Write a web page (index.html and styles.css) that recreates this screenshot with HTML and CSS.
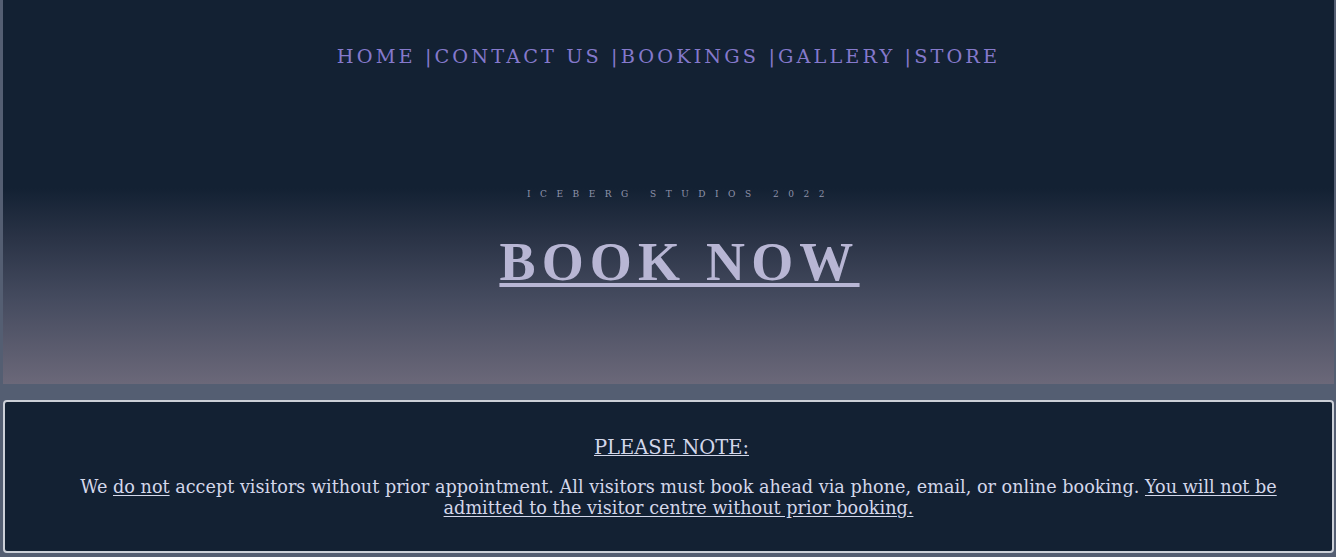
FILE: index.html
```html
<!DOCTYPE html>
<html lang="en">
<head>
<meta charset="utf-8">
<title>Iceberg Studios - Bookings</title>
<link rel="stylesheet" href="styles.css">
</head>
<body>
<header class="hero">
  <nav class="nav">
    <a href="#">HOME</a> |<a href="#">CONTACT US</a> |<a href="#">BOOKINGS</a> |<a href="#">GALLERY</a> |<a href="#">STORE</a>
  </nav>
  <p class="tagline">ICEBERG STUDIOS 2022</p>
  <h1 class="title"><a href="#">BOOK NOW</a></h1>
</header>
<section class="notice">
  <h2 class="notice-title">PLEASE NOTE:</h2>
  <p class="notice-text">We <u>do not</u> accept visitors without prior appointment. All visitors must book ahead via phone, email, or online booking. <u>You will not be admitted to the visitor centre without prior booking.</u></p>
</section>
</body>
</html>
```
FILE: styles.css
```css
html, body {
  margin: 0;
  padding: 0;
}
body {
  background: #545e72;
  padding: 0 2px 0 3px;
  font-family: "DejaVu Serif", Georgia, serif;
  height: 557px;
  box-sizing: border-box;
  overflow: hidden;
}
.hero {
  height: 384px;
  background: linear-gradient(to bottom, #132133 0%, #132133 49%, #2a3346 62%, #454b5f 78%, #6b6879 100%);
  text-align: center;
  padding-top: 45px;
  box-sizing: border-box;
}
.nav {
  font-size: 19.3px;
  letter-spacing: 3.1px;
  color: #8579cc;
  line-height: 24px;
}
.nav a {
  color: #8579cc;
  text-decoration: none;
}
.tagline {
  margin: 119px 0 0;
  padding-left: 24px;
  font-size: 9px;
  letter-spacing: 9.5px;
  color: #8f93ab;
  line-height: 12px;
}
.title {
  margin: 32px 0 0;
  padding-left: 22px;
  font-family: "Liberation Serif", serif;
  font-size: 54px;
  font-weight: bold;
  letter-spacing: 6.2px;
  line-height: 60px;
}
.title a {
  color: #b8b6d4;
  text-decoration: underline;
  text-decoration-thickness: 4px;
  text-underline-offset: 3px;
}
.notice {
  margin-top: 16px;
  height: 153px;
  box-sizing: border-box;
  border: 2px solid #ccd0d8;
  border-radius: 4px;
  background: #132133;
  text-align: center;
  color: #d3d7ea;
  padding: 34px 40px 0;
}
.notice-title {
  margin: 0;
  padding-left: 6px;
  font-size: 19.5px;
  font-weight: normal;
  text-decoration: underline;
  line-height: 24px;
}
.notice-text {
  margin: 17px 0 0;
  padding-left: 20px;
  font-size: 17.65px;
  line-height: 21px;
}
.notice-text u {
  text-underline-offset: 2px;
}
```
